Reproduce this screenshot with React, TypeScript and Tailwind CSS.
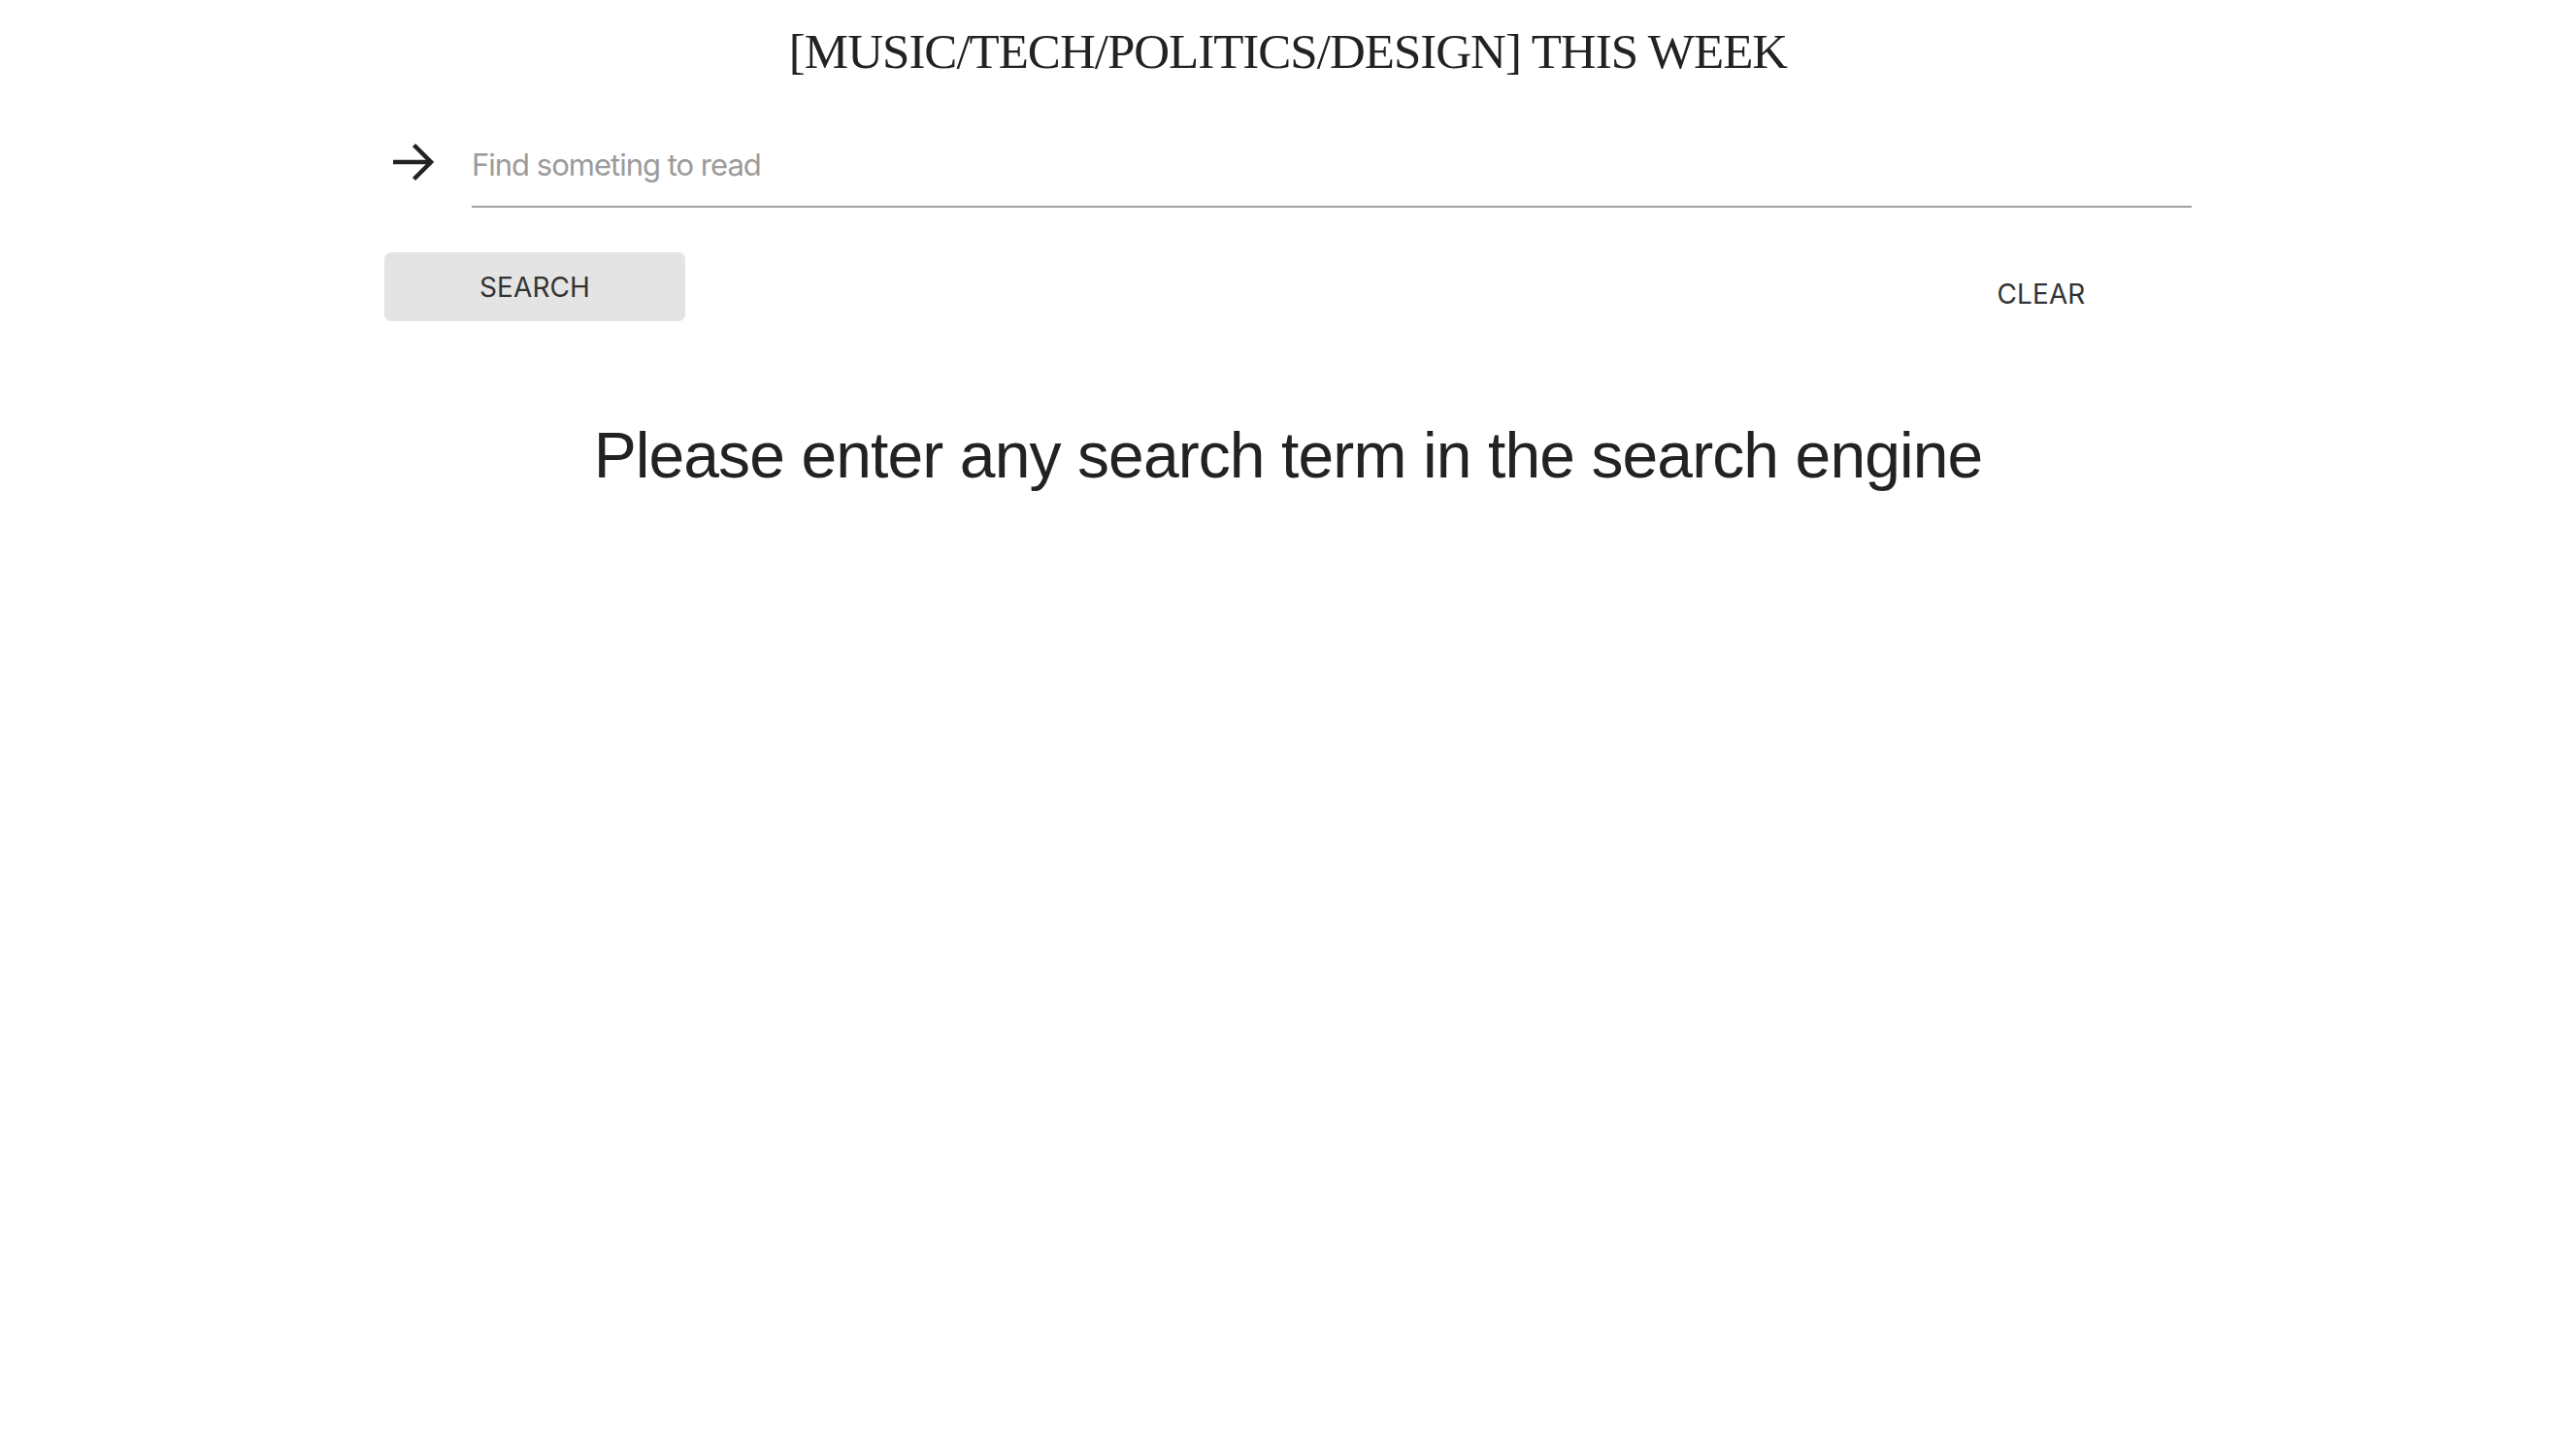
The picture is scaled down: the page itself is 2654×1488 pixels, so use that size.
import { useState } from "react";

function ArrowIcon() {
  return (
    <svg width="60" height="60" viewBox="0 0 60 60" fill="none" aria-hidden>
      <path d="M9 30H46" stroke="#222" strokeWidth="4.5" />
      <path d="M30.5 12.5L48 30L30.5 47.5" stroke="#222" strokeWidth="4.5" />
    </svg>
  );
}

export default function App() {
  const [query, setQuery] = useState("");

  return (
    <div className="min-h-screen bg-white font-['Inter','Liberation_Sans',sans-serif] text-[#222]">
      <h1 className="pt-[28px] text-center font-['Liberation_Serif','Times_New_Roman',serif] text-[51px] leading-none tracking-[-1px] text-[#222]">
        [MUSIC/TECH/POLITICS/DESIGN] THIS WEEK
      </h1>

      <div className="mx-auto w-[1862px]">
        {/* search input */}
        <div className="mt-[58px] flex items-start gap-[30px]">
          <div className="h-[60px] w-[60px] shrink-0">
            <ArrowIcon />
          </div>
          <div className="flex-1 border-b-2 border-[#a0a0a0] pt-[14px] pb-[23px]">
            <input
              value={query}
              onChange={(e) => setQuery(e.target.value)}
              placeholder="Find someting to read"
              className="block h-[38px] w-full bg-transparent text-[31px] leading-[38px] tracking-[-1px] text-[#222] outline-none placeholder:text-[#9b9b9b]"
            />
          </div>
        </div>

        {/* actions */}
        <div className="mt-[46px] flex items-start justify-between">
          <button className="h-[71px] w-[310px] rounded-[7px] bg-[#e4e4e4] text-[28px] tracking-[0.1px] text-[#333]">
            SEARCH
          </button>
          <button
            onClick={() => setQuery("")}
            className="mt-[7px] h-[71px] w-[310px] rounded-[7px] text-[28px] tracking-[0.1px] text-[#333]"
          >
            CLEAR
          </button>
        </div>
      </div>

      <p className="mt-[98px] text-center font-['Liberation_Sans',Arial,sans-serif] text-[66px] leading-none tracking-[-0.9px] text-[#222]">
        Please enter any search term in the search engine
      </p>
    </div>
  );
}
